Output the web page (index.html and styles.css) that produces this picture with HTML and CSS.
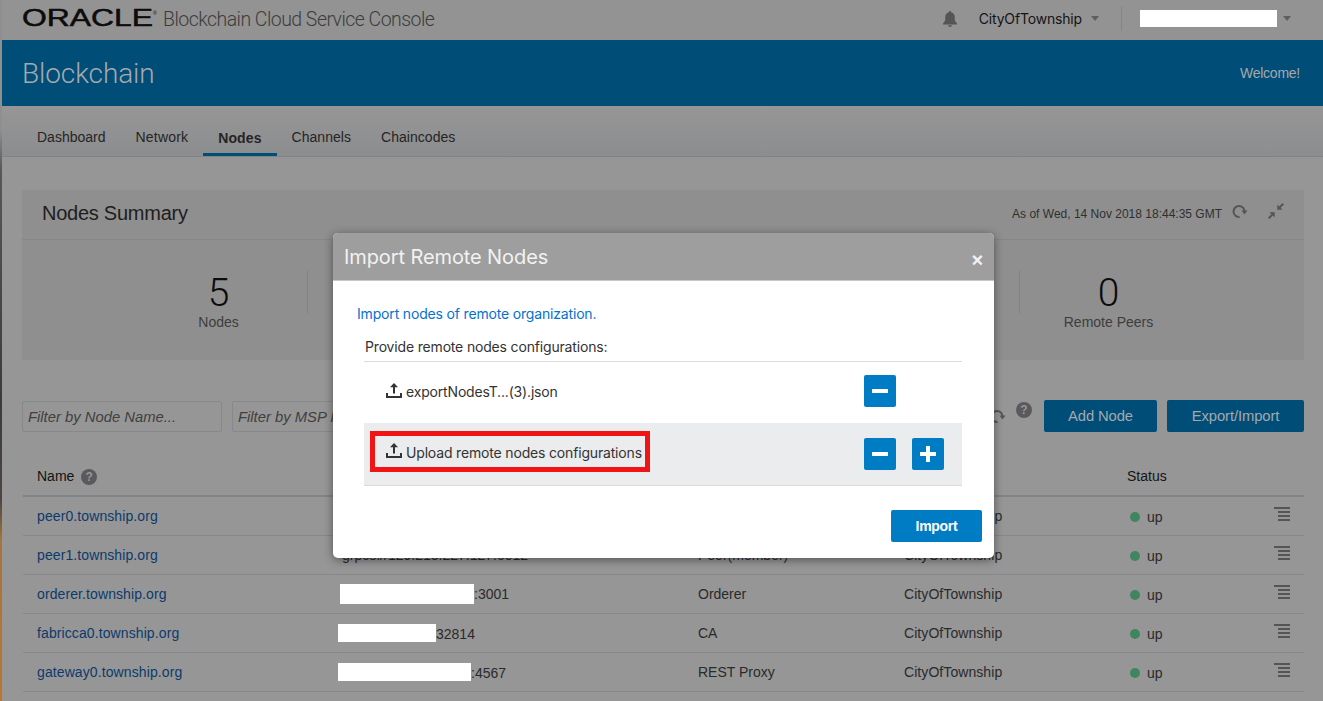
FILE: index.html
```html
<!DOCTYPE html>
<html lang="en">
<head>
    <title>Blockchain Cloud Service Console</title>
    <meta charset="UTF-8">
    <link rel="stylesheet" href="styles.css">
</head>

<body>
    <div class="page">
        <header class="topbar">
            <div class="brand">
                <svg class="logo" width="136" height="30" viewBox="0 0 136 30" role="img" aria-label="Oracle">
                    <text x="0" y="21" textLength="131" lengthAdjust="spacingAndGlyphs" class="logo-text">ORACLE</text>
                    <text x="131" y="10" class="logo-mark">®</text>
                </svg>
                <span class="brand-name">Blockchain Cloud Service Console</span>
            </div>
            <div class="topbar-right">
                <svg class="bell" width="14" height="16" viewBox="0 0 14 16">
                    <path d="M7 0a1.2 1.2 0 0 1 1.2 1.3C10.600 1.900 11.800 3.800 11.800 6.300v3.200L14 12.600v.9H0v-.9l2.200-3.100V6.300c0-2.500 1.200-4.400 3.600-5A1.200 1.200 0 0 1 7 0zM5 14.300h4A2 2 0 0 1 7 16a2 2 0 0 1-2-1.700z"/>
                </svg>
                <span class="org">CityOfTownship</span>
                <span class="caret"></span>
                <span class="top-sep"></span>
                <span class="redact redact-user"></span>
                <span class="caret caret-user"></span>
            </div>
        </header>

        <div class="banner">
            <span class="banner-title">Blockchain</span>
            <span class="banner-welcome">Welcome!</span>
        </div>

        <nav class="tabs">
            <a class="tab">Dashboard</a>
            <a class="tab">Network</a>
            <a class="tab tab-active">Nodes</a>
            <a class="tab">Channels</a>
            <a class="tab">Chaincodes</a>
        </nav>

        <main class="content">
            <section class="summary">
                <div class="summary-head">
                    <h2>Nodes Summary</h2>
                    <div class="summary-tools">
                        <span class="as-of">As of Wed, 14 Nov 2018 18:44:35 GMT</span>
                        <svg class="refresh refresh-head" width="16" height="14" viewBox="0 0 16 14">
                            <path d="M7.500 13A5.500 5.500 0 1 1 12.500 7" fill="none" stroke-width="2"/>
                            <path class="solid" d="M9.500 6.500h6l-3 4z"/>
                        </svg>
                        <svg class="compress" width="16" height="16" viewBox="0 0 16 16">
                            <path d="M9.300 6.700V1.500l1.900 1.900L14.500 0 16 1.500l-3.400 3.300 1.900 1.900zM6.700 9.300v5.200l-1.900-1.900L1.500 16 0 14.500l3.400-3.300-1.900-1.900z"/>
                        </svg>
                    </div>
                </div>
                <div class="stats">
                    <div class="stat">
                        <div class="stat-num">5</div>
                        <div class="stat-label">Nodes</div>
                    </div>
                    <div class="stat"></div>
                    <div class="stat"></div>
                    <div class="stat"></div>
                    <div class="stat"></div>
                    <div class="stat">
                        <div class="stat-num">0</div>
                        <div class="stat-label">Remote Peers</div>
                    </div>
                </div>
            </section>

            <div class="toolbar">
                <input class="filter" type="text" placeholder="Filter by Node Name...">
                <input class="filter" type="text" placeholder="Filter by MSP ID...">
                <div class="toolbar-right">
                    <svg class="refresh" width="16" height="14" viewBox="0 0 16 14">
                        <path d="M7.500 13A5.500 5.500 0 1 1 12.500 7" fill="none" stroke-width="2"/>
                        <path class="solid" d="M9.500 6.500h6l-3 4z"/>
                    </svg>
                    <span class="help">?</span>
                    <button class="btn-dark btn-add">Add Node</button>
                    <button class="btn-dark btn-export">Export/Import</button>
                </div>
            </div>

            <table class="nodes">
                <colgroup>
                    <col class="col-name">
                    <col class="col-url">
                    <col class="col-type">
                    <col class="col-org">
                    <col class="col-status">
                    <col>
                </colgroup>
                <thead>
                    <tr>
                        <th>Name <span class="help help-th">?</span></th>
                        <th></th>
                        <th></th>
                        <th></th>
                        <th>Status</th>
                        <th></th>
                    </tr>
                </thead>
                <tbody>
                    <tr>
                        <td><a>peer0.township.org</a></td>
                        <td></td>
                        <td></td>
                        <td>CityOfTownship</td>
                        <td><span class="dot"></span>up</td>
                        <td class="cell-menu"><span class="menu-icon"></span></td>
                    </tr>
                    <tr>
                        <td><a>peer1.township.org</a></td>
                        <td>grpcs://129.213.227.127:6012</td>
                        <td>Peer(member)</td>
                        <td>CityOfTownship</td>
                        <td><span class="dot"></span>up</td>
                        <td class="cell-menu"><span class="menu-icon"></span></td>
                    </tr>
                    <tr>
                        <td><a>orderer.township.org</a></td>
                        <td><span class="redact redact-a"></span>:3001</td>
                        <td>Orderer</td>
                        <td>CityOfTownship</td>
                        <td><span class="dot"></span>up</td>
                        <td class="cell-menu"><span class="menu-icon"></span></td>
                    </tr>
                    <tr>
                        <td><a>fabricca0.township.org</a></td>
                        <td><span class="redact redact-b"></span>32814</td>
                        <td>CA</td>
                        <td>CityOfTownship</td>
                        <td><span class="dot"></span>up</td>
                        <td class="cell-menu"><span class="menu-icon"></span></td>
                    </tr>
                    <tr>
                        <td><a>gateway0.township.org</a></td>
                        <td><span class="redact redact-c"></span>:4567</td>
                        <td>REST Proxy</td>
                        <td>CityOfTownship</td>
                        <td><span class="dot"></span>up</td>
                        <td class="cell-menu"><span class="menu-icon"></span></td>
                    </tr>
                </tbody>
            </table>
        </main>
    </div>

    <div class="modal">
        <div class="modal-head">
            <span class="modal-title">Import Remote Nodes</span>
            <span class="modal-close">×</span>
        </div>
        <div class="modal-body">
            <p class="modal-intro">Import nodes of remote organization.</p>
            <div class="config">
                <div class="config-title">Provide remote nodes configurations:</div>
                <div class="config-row">
                    <div class="upload upload-file">
                        <svg class="upload-icon" width="16" height="15" viewBox="0 0 16 15">
                            <path d="M8 0l4 4.300H9v6.200H7V4.300H4zM0 10h2v3h12v-3h2v5H0z"/>
                        </svg>
                        <span>exportNodesT...(3).json</span>
                    </div>
                    <div class="row-btns row-btns-file">
                        <button class="btn-square"><span class="minus"></span></button>
                    </div>
                </div>
                <div class="config-row config-row-active">
                    <div class="upload upload-marked">
                        <svg class="upload-icon" width="16" height="15" viewBox="0 0 16 15">
                            <path d="M8 0l4 4.300H9v6.200H7V4.300H4zM0 10h2v3h12v-3h2v5H0z"/>
                        </svg>
                        <span>Upload remote nodes configurations</span>
                    </div>
                    <div class="row-btns">
                        <button class="btn-square"><span class="minus"></span></button>
                        <button class="btn-square"><span class="plus"></span></button>
                    </div>
                </div>
            </div>
            <div class="modal-foot">
                <button class="btn-import">Import</button>
            </div>
        </div>
    </div>
</body>
</html>
```

FILE: styles.css
```css
html {
    font-family: "Liberation Sans", Arial, sans-serif;
}

body {
    margin: 0;
    height: 701px;
    overflow: hidden;
    position: relative;
    background: linear-gradient(#8f8f8f 0, #8f8f8f 130px, #56585c 170px, #3c3a3c 400px, #4d4642 500px, #a5743f 540px, #b9772f 701px);
    color: #2f2f2f;
    font-size: 14px;
}

.page {
    margin-left: 2px;
    height: 701px;
    background-color: #969696;
}

/* top bar */
.topbar {
    height: 40px;
    display: flex;
    align-items: center;
    justify-content: space-between;
    background-color: #939393;
}

.brand {
    display: flex;
    align-items: center;
    padding-left: 20px;
}

.logo {
    display: block;
    overflow: visible;
}

.logo-text {
    font-family: "Liberation Sans", sans-serif;
    font-size: 23px;
    fill: #0c0c0c;
    stroke: #0c0c0c;
    stroke-width: .5px;
}

.logo-mark {
    font-size: 5px;
    fill: #0c0c0c;
}

.brand-name {
    margin-left: 5px;
    padding-bottom: 2px;
    font-family: Roboto, sans-serif;
    font-size: 19.500px;
    font-weight: 300;
    letter-spacing: -.54px;
    color: #3d3d3d;
}

.topbar-right {
    display: flex;
    align-items: center;
    padding: 0 32px 3px 0;
}

.bell {
    fill: #555;
    margin-right: 22px;
}

.org {
    font-family: Inter, sans-serif;
    letter-spacing: -.17px;
    color: #141414;
}

.caret {
    width: 0;
    height: 0;
    margin-left: 9px;
    border-left: 4.500px solid transparent;
    border-right: 4.500px solid transparent;
    border-top: 5px solid #5f5f5f;
}

.top-sep {
    width: 1px;
    height: 25px;
    margin: 0 18px 0 22px;
    background-color: #848484;
}

.redact {
    display: inline-block;
    background-color: #fff;
}

.redact-user {
    width: 137px;
    height: 17px;
}

.caret-user {
    margin-left: 6px;
}

/* banner */
.banner {
    height: 66px;
    display: flex;
    align-items: center;
    justify-content: space-between;
    padding: 0 23px 0 20px;
    background-color: #004d78;
    color: #a4a9ad;
}

.banner-title {
    font-family: Roboto, sans-serif;
    font-size: 28px;
    font-weight: 300;
    letter-spacing: -.1px;
}

.banner-welcome {
    font-size: 14px;
    letter-spacing: -.25px;
}

/* tabs */
.tabs {
    height: 50px;
    display: flex;
    padding-left: 20px;
    border-bottom: 1px solid #7f848a;
    background: linear-gradient(#969696, #8c8d8f);
}

.tab {
    padding: 0 15px;
    line-height: 62px;
    height: 50px;
    box-sizing: border-box;
    letter-spacing: .04px;
    color: #252525;
}

.tab:first-child {
    letter-spacing: 0;
}

.tab:nth-child(2) {
    letter-spacing: .2px;
}

.tab-active {
    font-weight: 700;
    line-height: 64px;
    letter-spacing: .1px;
    border-bottom: 3px solid #004d78;
}

/* summary panel */
.content {
    padding: 33px 19px 0 20px;
}

.summary {
    height: 170px;
    background-color: #8f8f8f;
}

.summary-head {
    height: 50px;
    box-sizing: border-box;
    display: flex;
    align-items: center;
    justify-content: space-between;
    padding: 0 20px 2px 20px;
    border-bottom: 1px solid #85878a;
}

.summary-head h2 {
    margin: 0;
    font-size: 20px;
    font-weight: 400;
    letter-spacing: -.25px;
    color: #1e1e1e;
}

.summary-tools {
    display: flex;
    align-items: center;
}

.as-of {
    font-size: 12px;
    color: #2f2f2f;
}

.refresh {
    stroke: #555;
    fill: #555;
    margin-left: 10px;
}

.refresh .solid {
    stroke: none;
}

.refresh-head {
    margin-top: -6px;
}

.compress {
    fill: #555;
    margin-left: 20px;
    margin-top: -6px;
}

.stats {
    display: grid;
    grid-template-columns: repeat(6, 178px);
    justify-content: center;
    padding-top: 30px;
}

.stat {
    height: 44px;
    text-align: center;
    border-left: 1px solid transparent;
}

.stat:nth-child(2),
.stat:nth-child(6) {
    border-left-color: #7f848a;
}

.stat-num {
    margin-top: 4px;
    font-family: Roboto, sans-serif;
    font-size: 39px;
    font-weight: 300;
    line-height: 38px;
    color: #0c0c0c;
}

.stat-label {
    color: #3d3d3d;
    line-height: 20px;
}

/* filter row */
.toolbar {
    display: flex;
    align-items: center;
    margin-top: 40px;
    height: 32px;
}

.filter {
    width: 200px;
    height: 31px;
    box-sizing: border-box;
    padding: 2px 5px 0;
    margin-right: 10px;
    border: 1px solid #85898c;
    border-radius: 2px;
    background-color: #969696;
    font-family: "Liberation Sans", sans-serif;
    font-size: 14.800px;
    font-style: italic;
}

.filter::placeholder {
    color: #404040;
    opacity: 1;
}

.toolbar-right {
    display: flex;
    align-items: center;
    margin-left: auto;
}

.help {
    display: inline-block;
    width: 16px;
    height: 16px;
    border-radius: 50%;
    background-color: #5a5a5c;
    color: #969696;
    font-size: 12px;
    font-weight: 700;
    line-height: 16px;
    text-align: center;
}

.toolbar-right .help {
    margin: -12px 12px 0 10px;
}

.btn-dark {
    height: 32px;
    border: none;
    border-radius: 2px;
    background-color: #004d78;
    color: #a4a9ad;
    font-family: "Liberation Sans", sans-serif;
    font-size: 14.800px;
    letter-spacing: -.1px;
    padding: 0 0 1px;
}

.btn-add {
    width: 113px;
    margin-right: 10px;
}

.btn-export {
    width: 137px;
}

/* table */
.nodes {
    width: 1281px;
    margin: 28px 0 0 1px;
    border-collapse: collapse;
    table-layout: fixed;
}

.col-name { width: 303px; }
.col-url { width: 358px; }
.col-type { width: 206px; }
.col-org { width: 223px; }
.col-status { width: 120px; }

.nodes th {
    height: 36px;
    padding: 0 0 3px 14px;
    box-sizing: border-box;
    text-align: left;
    font-weight: 400;
    color: #141414;
    border-bottom: 2px solid #7f848a;
}

.help-th {
    margin-left: 3px;
}

.nodes td {
    height: 39px;
    box-sizing: border-box;
    padding: 0 0 0 14px;
    border-bottom: 1px solid #85878a;
    color: #2a2a2a;
}

.nodes td:nth-child(2) {
    padding-left: 16px;
}

.nodes td:nth-child(4) {
    letter-spacing: .07px;
}

.nodes td:nth-child(5) {
    padding-top: 2px;
}

.nodes a {
    color: #0c3a6b;
    letter-spacing: .1px;
}

.dot {
    display: inline-block;
    width: 10px;
    height: 10px;
    margin: 0 7px 0 3px;
    border-radius: 50%;
    background-color: #3f8560;
}

.cell-menu {
    text-align: right;
}

.nodes td.cell-menu {
    padding: 0 14px 0 0;
}

.menu-icon {
    display: inline-block;
    position: relative;
    top: -3px;
    width: 16px;
    height: 14px;
    background:
        linear-gradient(#555, #555) 0 0 / 16px 2px no-repeat,
        linear-gradient(#555, #555) right 0 top 4px / 12px 2px no-repeat,
        linear-gradient(#555, #555) right 0 top 8px / 12px 2px no-repeat,
        linear-gradient(#555, #555) right 0 top 12px / 12px 2px no-repeat;
    vertical-align: middle;
}

.redact-a {
    width: 134px;
    height: 20px;
    margin-left: -2px;
    vertical-align: -5px;
}

.redact-b {
    width: 98px;
    height: 18px;
    margin-left: -4px;
    vertical-align: -3px;
}

.redact-c {
    width: 133px;
    height: 18px;
    margin-left: -4px;
    vertical-align: -3px;
}

/* dialog */
.modal {
    position: absolute;
    left: 333px;
    top: 233px;
    width: 661px;
    height: 325px;
    border-radius: 5px;
    overflow: hidden;
    background-color: #fff;
    box-shadow: 0 2px 10px rgba(0, 0, 0, .45);
    font-family: Inter, "Liberation Sans", sans-serif;
    letter-spacing: -.17px;
}

.modal-head {
    height: 48px;
    box-sizing: border-box;
    display: flex;
    align-items: center;
    justify-content: space-between;
    padding: 0 11px 0 11px;
    background-color: #9e9e9e;
    border-bottom: 1px solid #c8c8c8;
}

.modal-title {
    font-size: 20px;
    letter-spacing: -.1px;
    color: #f2f2f2;
}

.modal-close {
    margin-top: 8px;
    font-family: "Liberation Sans", sans-serif;
    font-size: 20px;
    font-weight: 700;
    color: #f2f2f2;
}

.modal-body {
    padding: 24px 12px 0 24px;
}

.modal-intro {
    margin: 0;
    font-size: 14px;
    line-height: 17px;
    color: #0572ce;
}

.config {
    margin: 16px 20px 0 7px;
}

.config-title {
    height: 24px;
    box-sizing: border-box;
    padding-left: 1px;
    border-bottom: 1px solid #dcdcdc;
    line-height: 17px;
    color: #333;
}

.config-row {
    display: flex;
    align-items: center;
    justify-content: space-between;
    height: 61px;
    padding-right: 18px;
}

.config-row-active {
    height: 63px;
    box-sizing: border-box;
    background-color: #ebecee;
    border-bottom: 1px solid #dcdcdc;
}

.upload {
    display: flex;
    align-items: center;
    color: #333;
}

.upload span {
    margin-top: -2px;
}

.upload-icon {
    fill: #333;
    margin-right: 4px;
    margin-top: -5px;
}

.upload-file {
    padding-left: 22px;
}

.upload-marked {
    margin: 0 0 6px 6px;
    height: 41px;
    box-sizing: border-box;
    padding: 4px 3px 0 11px;
    border: 5px solid #f01414;
}

.row-btns {
    display: flex;
    gap: 16px;
    width: 80px;
}

.row-btns-file {
    margin-bottom: 3px;
}

.btn-square {
    position: relative;
    width: 32px;
    height: 32px;
    padding: 0;
    border: none;
    border-radius: 2px;
    background-color: #007cc5;
}

.minus,
.plus {
    position: absolute;
    left: 8px;
    top: 14px;
    width: 16px;
    height: 4px;
    background-color: #fff;
}

.plus::after {
    content: "";
    position: absolute;
    left: 6px;
    top: -6px;
    width: 4px;
    height: 16px;
    background-color: #fff;
}

.modal-foot {
    display: flex;
    justify-content: flex-end;
    margin-top: 24px;
}

.btn-import {
    width: 91px;
    height: 32px;
    border: none;
    border-radius: 2px;
    background-color: #007cc5;
    color: #fff;
    font-family: "Liberation Sans", sans-serif;
    font-size: 14px;
    font-weight: 700;
    letter-spacing: -.3px;
    padding: 0;
}
```
